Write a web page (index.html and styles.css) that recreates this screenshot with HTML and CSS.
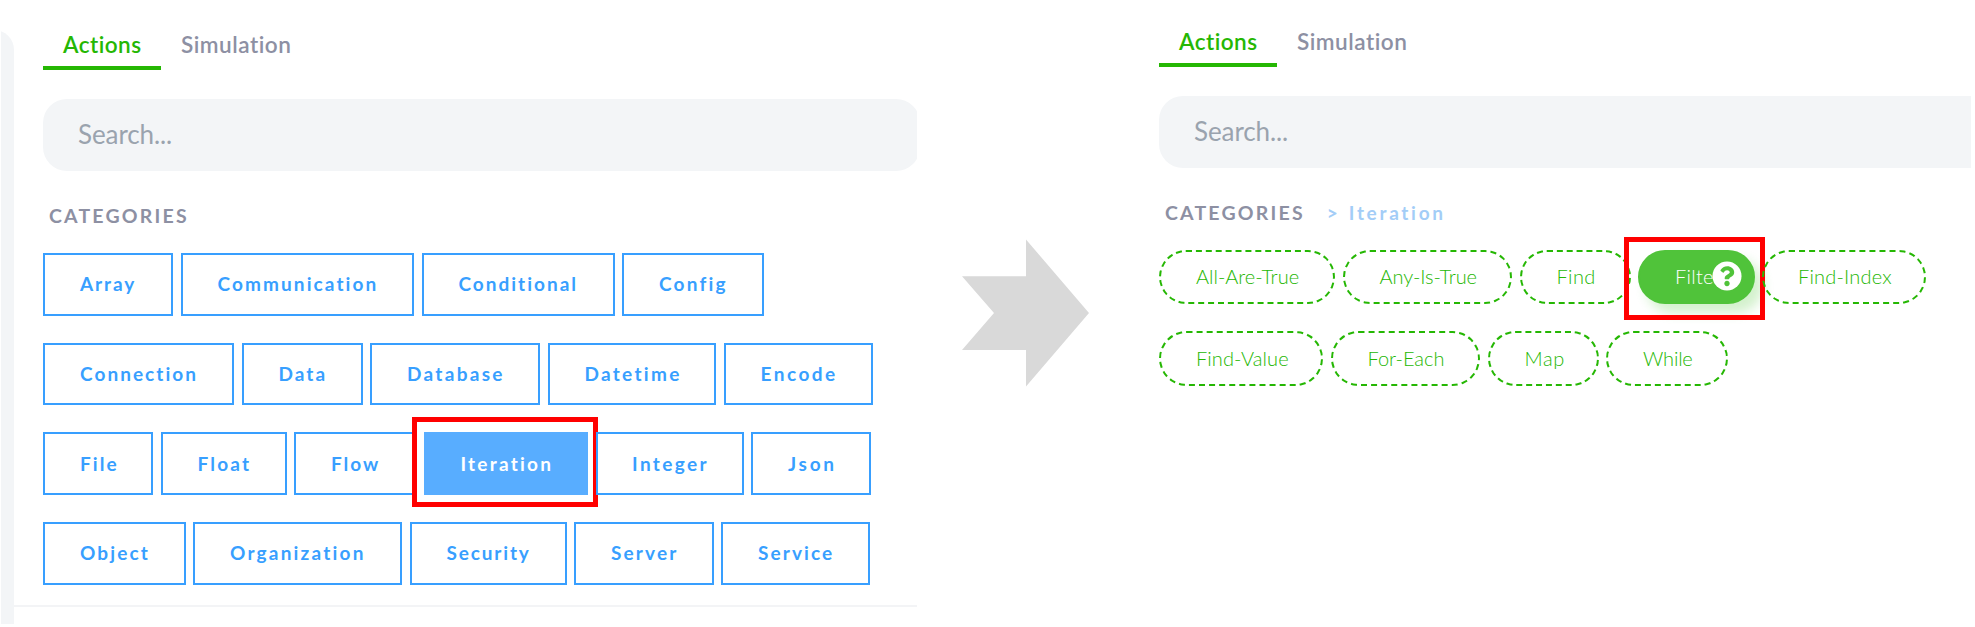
FILE: index.html
```html
<!DOCTYPE html>
<html lang="en">
<head>
<meta charset="utf-8">
<title>Actions</title>
<link rel="stylesheet" href="styles.css">
</head>
<body>
<main class="board">
  <section class="panel panel-left">
    <div class="rail"></div>
    <div class="content">
      <nav class="tabs">
        <a class="tab active">Actions</a>
        <a class="tab">Simulation</a>
      </nav>
      <div class="search"><span>Search...</span></div>
      <h2 class="heading">CATEGORIES</h2>
      <div class="rows">
        <div class="row">
          <div class="chip array">Array</div>
          <div class="chip communication">Communication</div>
          <div class="chip conditional">Conditional</div>
          <div class="chip config">Config</div>
        </div>
        <div class="row">
          <div class="chip connection">Connection</div>
          <div class="chip data">Data</div>
          <div class="chip database">Database</div>
          <div class="chip datetime">Datetime</div>
          <div class="chip encode">Encode</div>
        </div>
        <div class="row">
          <div class="chip file">File</div>
          <div class="chip float">Float</div>
          <div class="chip flow">Flow</div>
          <div class="chip iteration selected">Iteration<i class="marker"></i></div>
          <div class="chip integer">Integer</div>
          <div class="chip json">Json</div>
        </div>
        <div class="row">
          <div class="chip object">Object</div>
          <div class="chip organization">Organization</div>
          <div class="chip security">Security</div>
          <div class="chip server">Server</div>
          <div class="chip service">Service</div>
        </div>
      </div>
    </div>
  </section>

  <svg class="arrow" width="127" height="148" viewBox="0 0 127 148"><path d="M0 37.3H64V.5L127 74 64 147.5V111H0L32 74Z" fill="#d9d9d9"/></svg>

  <section class="panel panel-right">
    <nav class="tabs">
      <a class="tab active">Actions</a>
      <a class="tab">Simulation</a>
    </nav>
    <div class="search"><span>Search...</span></div>
    <h2 class="heading">CATEGORIES <span class="crumb"><span class="sep">&gt;</span>Iteration</span></h2>
    <div class="rows">
      <div class="row">
        <div class="pill all-are-true">All-Are-True</div>
        <div class="pill any-is-true">Any-Is-True</div>
        <div class="pill find">Find</div>
        <div class="pill filter selected">Filter
          <svg class="help" viewBox="0 0 512 512"><circle cx="256" cy="256" r="248" fill="#fff"/><path fill="#50c33a" d="M262.655 90c-54.497 0-89.255 22.957-116.549 63.758-3.536 5.286-2.353 12.415 2.715 16.258l34.699 26.31c5.205 3.947 12.621 3.008 16.665-2.122 17.864-22.658 30.113-35.797 57.303-35.797 20.429 0 45.698 13.148 45.698 32.958 0 14.976-12.363 22.667-32.534 33.976C247.128 238.528 216 254.941 216 296v4c0 6.627 5.373 12 12 12h56c6.627 0 12-5.373 12-12v-1.333c0-28.462 83.186-29.647 83.186-106.667 0-58.002-60.165-102-116.531-102zM256 338c-25.365 0-46 20.635-46 46 0 25.364 20.635 46 46 46s46-20.636 46-46c0-25.365-20.635-46-46-46z"/></svg>
          <i class="marker"></i>
        </div>
        <div class="pill find-index">Find-Index</div>
      </div>
      <div class="row">
        <div class="pill find-value">Find-Value</div>
        <div class="pill for-each">For-Each</div>
        <div class="pill map">Map</div>
        <div class="pill while">While</div>
      </div>
    </div>
  </section>
</main>
</body>
</html>
```
FILE: styles.css
```css
* { box-sizing: border-box; }

body {
  margin: 0;
  background: #fff;
  font-family: Lato, "Liberation Sans", sans-serif;
}

.board {
  display: flex;
  align-items: flex-start;
  width: 1975px;
  height: 627px;
  overflow: hidden;
}

.panel { flex: none; overflow: hidden; }

.panel-left {
  display: flex;
  width: 916px;
  height: 624px;
  margin-left: 1px;
}

.panel-right {
  width: 812px;
  margin-left: 70px;
  padding-top: 23px;
}

.rail {
  flex: none;
  width: 20px;
  height: 594px;
  margin: 30px 0 0 -7px;
  background: #f3f5f7;
  border-top-right-radius: 20px;
}

.content {
  flex: 1;
  min-width: 0;
  height: 607px;
  padding: 26px 0 0 29px;
  border-bottom: 2px solid #f3f4f6;
}

.tabs { display: flex; height: 44px; }

.tab {
  height: 43.5px;
  padding: 5px 19px 0 20px;
  border-bottom: 4px solid transparent;
  color: #8d90a3;
  font-size: 22.6px;
  font-weight: 600;
  line-height: 27px;
  letter-spacing: .5px;
}

.tab.active {
  flex: none;
  width: 118px;
  padding-right: 0;
  border-color: #25b703;
  color: #25b703;
  letter-spacing: .45px;
}

.search {
  display: flex;
  align-items: center;
  width: 877px;
  height: 72px;
  margin-top: 29px;
  padding: 0 0 3px 35px;
  border-radius: 24px;
  background: #f3f5f7;
  color: #9aa3ae;
  font-size: 26px;
  letter-spacing: -.1px;
}

.heading {
  display: flex;
  height: 24px;
  margin: 33px 0 0;
  padding-left: 6px;
  color: #8d90a3;
  font-size: 19.5px;
  font-weight: 700;
  line-height: 24px;
  letter-spacing: 2.2px;
}

.crumb {
  display: flex;
  gap: 11px;
  margin-left: 22px;
  color: #a3cdf7;
  font-size: 19px;
  letter-spacing: 2.7px;
}

.sep { letter-spacing: 0; }

.rows {
  display: flex;
  flex-direction: column;
  gap: 27px;
  margin-top: 25px;
}

.row { display: flex; gap: 7.5px; height: 62.7px; }

.chip {
  position: relative;
  flex: none;
  display: flex;
  align-items: center;
  padding: 0 0 1px 35px;
  border: 2px solid #389fff;
  color: #389fff;
  font-size: 19px;
  font-weight: 700;
  letter-spacing: 2.2px;
}

.chip.selected {
  border-color: #58adff;
  background: #58adff;
  color: #fff;
}

.array { width: 130px; letter-spacing: 1.9px; }
.communication { width: 233.5px; letter-spacing: 2.1px; }
.conditional { width: 193px; letter-spacing: 2px; }
.config { width: 142px; }
.connection { width: 191px; letter-spacing: 2.05px; }
.data { width: 121px; letter-spacing: 2.05px; }
.database { width: 170px; letter-spacing: 2.3px; }
.datetime { width: 168.5px; letter-spacing: 2.3px; }
.encode { width: 149px; letter-spacing: 2.5px; }
.file { width: 110px; letter-spacing: 2.05px; }
.float { width: 126px; }
.flow { width: 122.5px; letter-spacing: 2px; }
.iteration { width: 164px; padding-left: 34.5px; letter-spacing: 2.25px; }
.integer { width: 148px; padding-left: 34.5px; letter-spacing: 2.4px; }
.json { width: 120px; letter-spacing: 2.75px; }
.object { width: 142.5px; letter-spacing: 2.15px; }
.organization { width: 209px; }
.security { width: 157px; letter-spacing: 1.85px; }
.server { width: 139.5px; letter-spacing: 2.15px; }
.service { width: 148.5px; letter-spacing: 2.1px; }

.marker {
  position: absolute;
  top: -17px;
  left: -14px;
  width: 186px;
  height: 90px;
  border: 5px solid #f00;
}

.panel-right .rows { margin-top: 24.8px; }
.panel-right .row { height: 54.7px; gap: 7.5px; }

.pill {
  position: relative;
  flex: none;
  display: flex;
  align-items: center;
  padding: 0 0 2px 35px;
  border: 2px dashed #25b703;
  border-radius: 28px;
  color: #25b703;
  font-size: 20px;
  font-weight: 300;
  white-space: nowrap;
}

.pill.selected {
  border: 2px solid #50c33a;
  background: #50c33a;
  box-shadow: 8px 9px 12px rgba(37, 183, 3, .2);
  color: #fff;
}

.all-are-true { width: 176px; }
.any-is-true { width: 169.5px; letter-spacing: -.1px; }
.find { width: 111px; letter-spacing: .4px; }
.filter { width: 116.5px; letter-spacing: .3px; }
.find-index { width: 164px; padding-left: 34px; letter-spacing: .2px; }
.find-value { width: 164px; letter-spacing: .1px; }
.for-each { width: 149.5px; }
.map { width: 111px; letter-spacing: .6px; }
.while { width: 122px; letter-spacing: -.2px; }

.help {
  position: absolute;
  top: 9.5px;
  left: 72px;
  width: 30px;
  height: 30px;
}

.pill .marker {
  top: -15px;
  left: -16px;
  width: 141px;
  height: 83px;
}

.panel-right .search {
  width: 812px;
  border-radius: 24px 0 0 24px;
}

.arrow { flex: none; margin: 239px 0 0 45px; }
```
